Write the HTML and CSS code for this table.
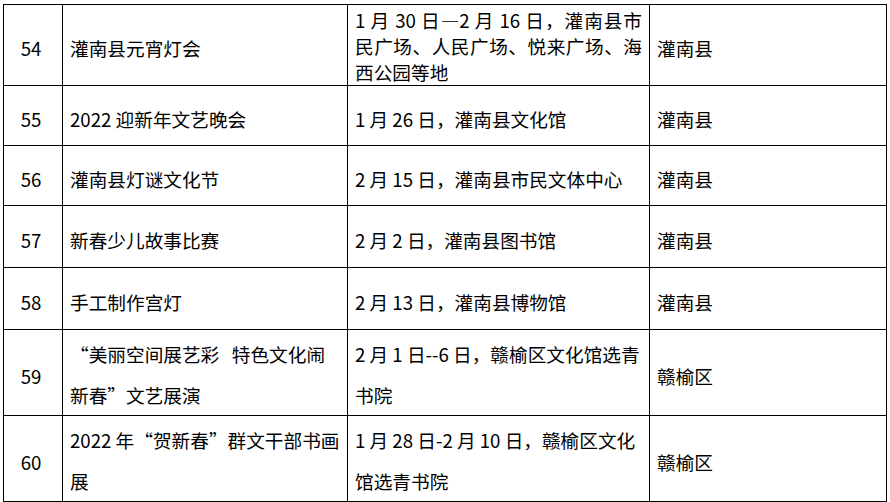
FILE: index.html
```html
<!DOCTYPE html>
<html lang="zh-CN">
<head>
<meta charset="utf-8">
<title>活动列表</title>
<link rel="stylesheet" href="styles.css">
</head>
<body>
<table class="events">
  <colgroup>
    <col class="c-no">
    <col class="c-name">
    <col class="c-time">
    <col class="c-area">
  </colgroup>
  <tbody>
    <tr class="r-tall">
      <td class="no">54</td>
      <td>灌南县元宵灯会</td>
      <td class="time">1 月 30 日—2 月 16 日，灌南县市民广场、人民广场、悦来广场、海西公园等地</td>
      <td>灌南县</td>
    </tr>
    <tr class="r-std">
      <td class="no">55</td>
      <td>2022 迎新年文艺晚会</td>
      <td>1 月 26 日，灌南县文化馆</td>
      <td>灌南县</td>
    </tr>
    <tr class="r-std">
      <td class="no">56</td>
      <td>灌南县灯谜文化节</td>
      <td>2 月 15 日，灌南县市民文体中心</td>
      <td>灌南县</td>
    </tr>
    <tr class="r-std2">
      <td class="no">57</td>
      <td>新春少儿故事比赛</td>
      <td>2 月 2 日，灌南县图书馆</td>
      <td>灌南县</td>
    </tr>
    <tr class="r-std2">
      <td class="no">58</td>
      <td>手工制作宫灯</td>
      <td>2 月 13 日，灌南县博物馆</td>
      <td>灌南县</td>
    </tr>
    <tr class="r-59">
      <td class="no">59</td>
      <td class="loose">“美丽空间展艺彩&nbsp;&nbsp;&nbsp;特色文化闹新春”文艺展演</td>
      <td class="loose">2 月 1 日--6 日，赣榆区文化馆选青书院</td>
      <td>赣榆区</td>
    </tr>
    <tr class="r-60">
      <td class="no">60</td>
      <td class="loose">2022 年“贺新春”群文干部书画展</td>
      <td class="loose">1 月 28 日-2 月 10 日，赣榆区文化馆选青书院</td>
      <td>赣榆区</td>
    </tr>
  </tbody>
</table>
</body>
</html>
```

FILE: styles.css
```css
html, body {
  margin: 0;
  padding: 0;
  background: #ffffff;
}

body {
  padding: 4px 0 0 3px;
  font-family: "Noto Sans CJK SC", "Noto Sans", sans-serif;
  font-size: 18.67px;
  color: #000000;
}

.events {
  border-collapse: collapse;
  table-layout: fixed;
  width: 883px;
}

.c-no { width: 59px; }
.c-name { width: 285px; }
.c-time { width: 302px; }
.c-area { width: 237px; }

.events td {
  border: 1px solid #000000;
  padding: 6px 7px 0 7px;
  vertical-align: middle;
  line-height: 26px;
  text-align: left;
  word-break: break-all;
}

.events td.no {
  text-align: center;
  padding-left: 0;
  padding-right: 4px;
}

.events td.time {
  text-align: justify;
  padding-top: 2px;
}

.events td.loose {
  line-height: 41px;
  padding-top: 3px;
}

.r-tall { height: 80px; }
.r-std { height: 60px; }
.r-std2 { height: 62px; }
.r-59 { height: 86px; }
.r-60 { height: 81px; }
```
